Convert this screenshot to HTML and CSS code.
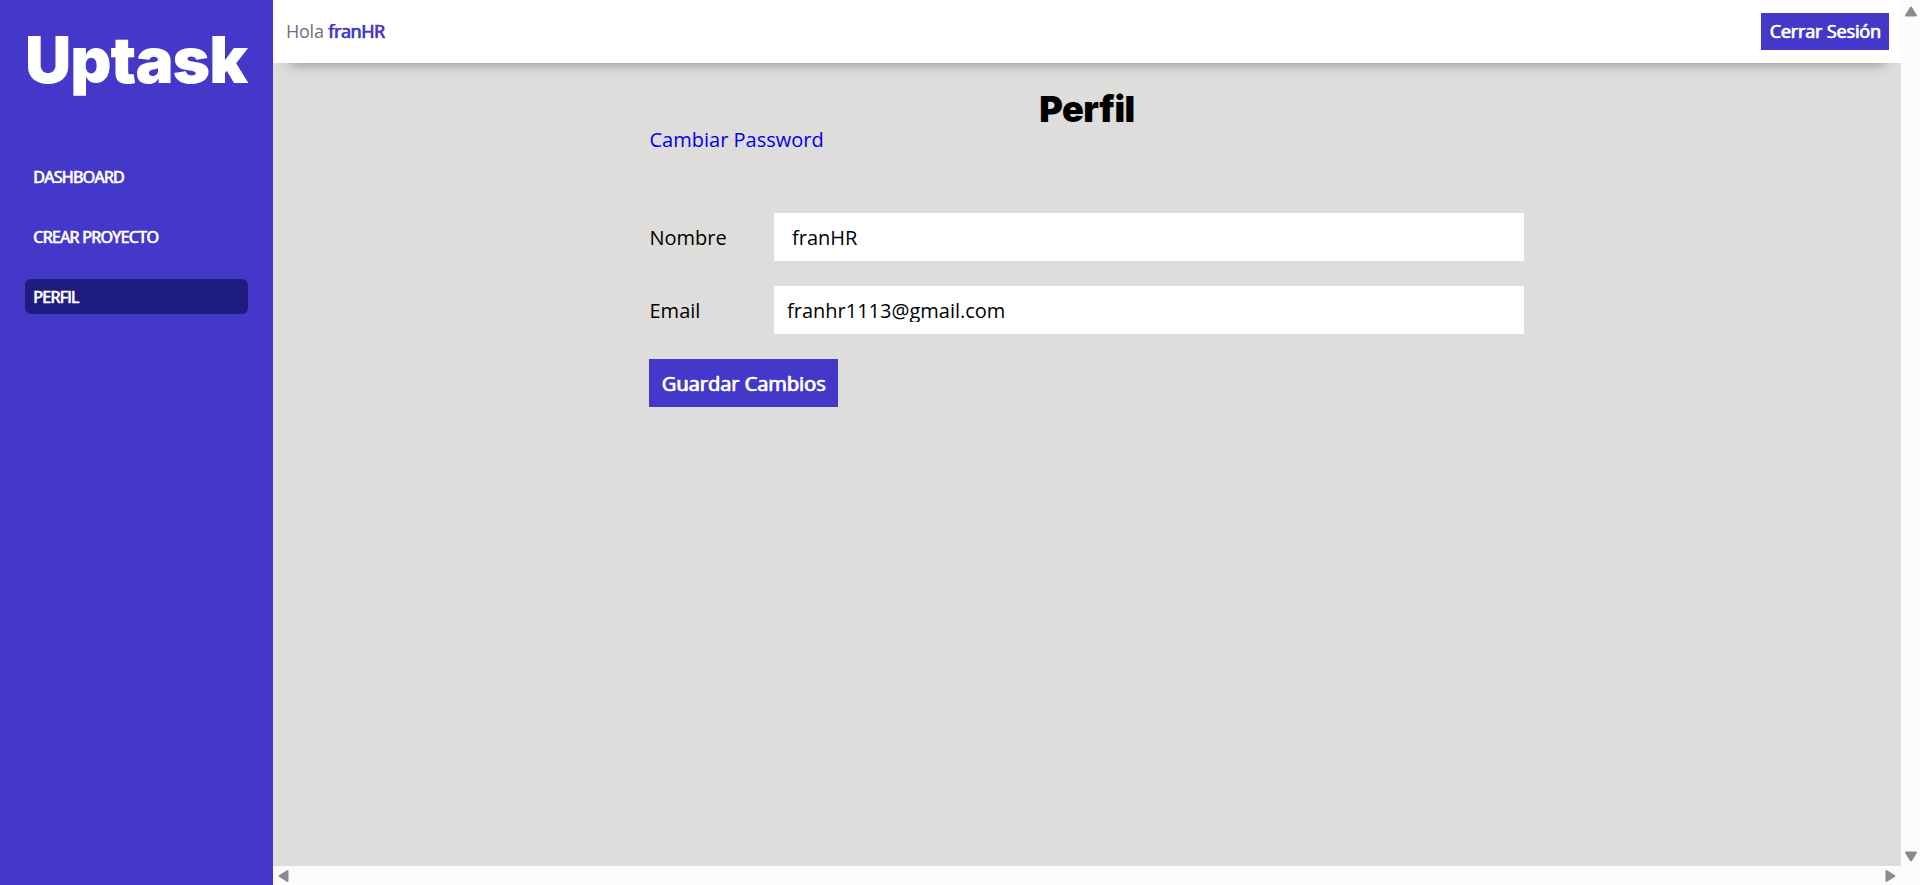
FILE: index.html
```html
<!DOCTYPE html>
<html lang="es">
<head>
<meta charset="utf-8">
<title>Uptask | Perfil</title>
<link rel="stylesheet" href="styles.css">
</head>
<body>
<div class="dashboard">
  <aside class="sidebar">
    <h2 class="logo">Uptask</h2>
    <nav class="sidebar-nav">
      <a href="#">Dashboard</a>
      <a href="#">Crear Proyecto</a>
      <a class="active" href="#">Perfil</a>
    </nav>
  </aside>
  <div class="viewport">
    <div class="principal">
      <header class="barra">
        <p class="saludo">Hola <span>franHR</span></p>
        <a class="cerrar-sesion" href="#">Cerrar Sesión</a>
      </header>
      <main class="contenido">
        <h1 class="nombre-pagina">Perfil</h1>
        <div class="contenedor">
          <a class="enlace" href="#">Cambiar Password</a>
          <form class="formulario">
            <div class="campo">
              <label for="nombre">Nombre</label>
              <input class="nombre" id="nombre" type="text" value="franHR">
            </div>
            <div class="campo">
              <label for="email">Email</label>
              <input id="email" type="email" value="franhr1113@gmail.com">
            </div>
            <button class="guardar" type="button">Guardar Cambios</button>
          </form>
        </div>
      </main>
    </div>
    <div class="scroll-y">
      <svg width="14" height="11" viewBox="0 0 14 11"><path d="M7 1.5 12 9.5H2Z"/></svg>
      <svg width="14" height="11" viewBox="0 0 14 11"><path d="M7 9.5 12 1.5H2Z"/></svg>
    </div>
    <div class="scroll-x">
      <svg width="11" height="14" viewBox="0 0 11 14"><path d="M1.5 7 9.5 2V12Z"/></svg>
      <svg width="11" height="14" viewBox="0 0 11 14"><path d="M9.5 7 1.5 2V12Z"/></svg>
    </div>
  </div>
</div>
</body>
</html>
```
FILE: styles.css
```css
*, *::before, *::after { box-sizing: border-box; }
body {
  margin: 0;
  font: 20px/24px "Open Sans", sans-serif;
  color: #000;
  overflow: hidden;
}
a { text-decoration: none; }
.dashboard {
  display: grid;
  grid-template-columns: 273px 1fr;
  height: 885px;
}
.sidebar { background: #4338ca; padding: 25px; }
.logo {
  margin: 0;
  height: 72px;
  font: 900 64px/70px Inter, sans-serif;
  letter-spacing: -1px;
  color: #fff;
  white-space: nowrap;
}
.sidebar-nav {
  display: flex;
  flex-direction: column;
  gap: 25px;
  margin-top: 62px;
}
.sidebar-nav a {
  height: 35px;
  padding: 1px 8px 0;
  border-radius: 6px;
  color: #fff;
  font-size: 16px;
  letter-spacing: -0.65px;
  line-height: 35px;
  text-transform: uppercase;
  -webkit-text-stroke: 0.3px #fff;
  text-shadow: 0.7px 0 0 #fff;
}
.sidebar-nav .active { background: #1f1c80; }
.viewport {
  display: grid;
  grid-template-columns: 1fr 19px;
  grid-template-rows: 1fr 19px;
}
.principal { background: #dedddb; }
.barra {
  display: flex;
  justify-content: space-between;
  align-items: center;
  height: 63px;
  padding: 0 12px;
  background: #fff;
  box-shadow: 0 16px 14px -16px rgba(0, 0, 0, 0.42);
}
.saludo { margin: 0; padding: 0 0 2px 1px; font-size: 18px; letter-spacing: -0.25px; color: #6b7280; }
.saludo span {
  color: #4338ca;
  letter-spacing: -0.4px;
  -webkit-text-stroke: 0.3px #4338ca;
  text-shadow: 0.7px 0 0 #4338ca;
}
.cerrar-sesion {
  width: 128px;
  height: 37px;
  background: #4338ca;
  color: #fff;
  font-size: 18px;
  letter-spacing: -0.15px;
  line-height: 37px;
  text-align: center;
  -webkit-text-stroke: 0.3px #fff;
  text-shadow: 0.8px 0 0 #fff;
}
.contenido { padding-top: 25px; }
.nombre-pagina {
  margin: 0;
  font: 900 36px/42px Inter, sans-serif;
  height: 40px;
  letter-spacing: -0.5px;
  text-align: center;
}
.contenedor { width: 876px; margin: 0 auto; }
.enlace { display: block; padding-left: 0.5px; line-height: 24px; color: #0000ee; }
.formulario {
  display: flex;
  flex-direction: column;
  align-items: flex-start;
  gap: 25px;
  margin-top: 61px;
}
.campo {
  display: grid;
  grid-template-columns: 125px 750px;
  align-items: center;
}
.campo label { padding: 2px 0 0 0.5px; }
.campo input {
  height: 48px;
  padding: 0 1px;
  border: 12px solid #fff;
  background: #fff;
  font: 20px "Open Sans", sans-serif;
  color: #000;
}
.campo .nombre { padding-left: 6px; }
.guardar {
  width: 189px;
  height: 48px;
  padding: 0;
  border: 0;
  background: #4338ca;
  color: #fff;
  font: 20px "Open Sans", sans-serif;
  -webkit-text-stroke: 0.3px #fff;
  text-shadow: 0.8px 0 0 #fff;
}
.scroll-y, .scroll-x {
  display: flex;
  justify-content: space-between;
  align-items: center;
  background: #fcfcfc;
}
.scroll-y { grid-row: 1 / 3; grid-column: 2; flex-direction: column; padding: 6px 0 23px; }
.scroll-x { grid-row: 2; grid-column: 1; padding: 0 5px; }
.scroll-y svg, .scroll-x svg {
  display: block;
  fill: #8b8b8b;
  stroke: #8b8b8b;
  stroke-width: 2;
  stroke-linejoin: round;
}
```
